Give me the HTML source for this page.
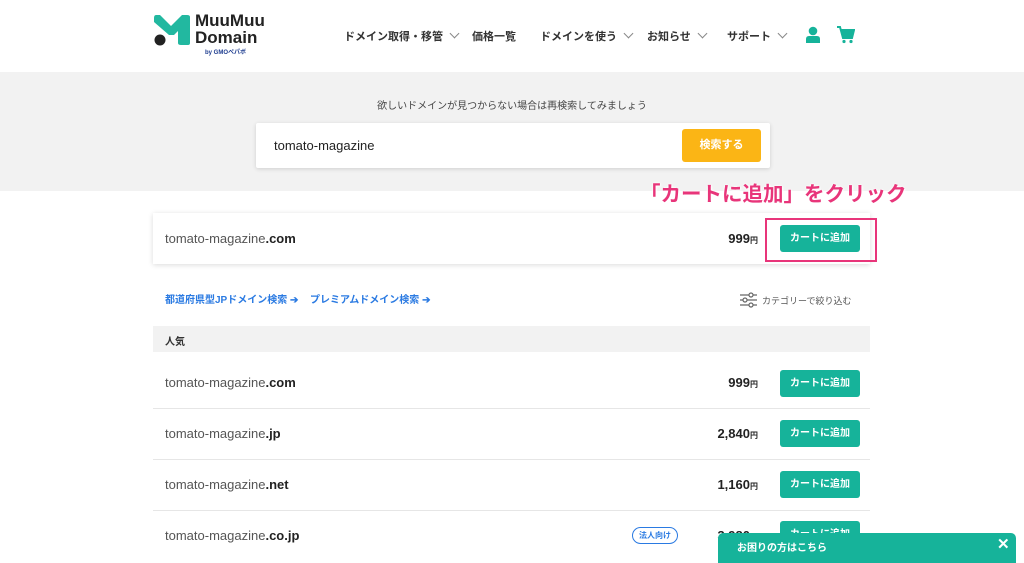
<!DOCTYPE html>
<html><head><meta charset="utf-8"><style>
*{margin:0;padding:0;box-sizing:border-box}
body{width:1024px;height:555px;overflow:hidden;background:#fff;font-family:"Liberation Sans","Noto Sans CJK JP",sans-serif;color:#333;position:relative}
.a{position:absolute}
.nav{font-size:11px;font-weight:bold;color:#333;top:28px}
.chev{display:inline-block;width:7px;height:7px;border-right:1px solid #888;border-bottom:1px solid #888;transform:rotate(45deg);margin-left:8px;position:relative;top:-3px}
.btn{background:#16b39a;color:#fff;font-size:10px;font-weight:bold;border-radius:3px;width:80px;height:27px;line-height:28px;text-align:center}
.dom{font-size:13px;color:#555}
.dom b{color:#222}
.price{font-size:13px;font-weight:bold;color:#222;text-align:right;width:100px}
.price small{font-size:8px}
.line{height:1px;background:#e6e6e6;left:153px;width:717px}
</style></head><body>
<svg class="a" style="left:152px;top:13px" width="40" height="33" viewBox="0 0 40 33">
<path d="M4 2 Q2 2 2 5 L2 9 L17 22 L22 22 L26 18 L26 30 Q26 32 29 32 L36 32 Q38 32 38 30 L38 4 Q38 2 35 2 L30 2 L19 13 L8 2 Z" fill="#22b8a0"/>
<circle cx="8" cy="27" r="5.5" fill="#222"/>
</svg>
<div class="a" style="left:195px;top:12px;font-size:17px;font-weight:bold;line-height:17px;color:#222">MuuMuu<br>Domain</div>
<div class="a" style="left:205px;top:47px;font-size:6px;color:#1d3c8f;font-weight:bold">by GMOペパボ</div>
<div class="a nav" style="left:344px">ドメイン取得・移管<span class="chev"></span></div>
<div class="a nav" style="left:472px">価格一覧</div>
<div class="a nav" style="left:540px">ドメインを使う<span class="chev"></span></div>
<div class="a nav" style="left:647px">お知らせ<span class="chev"></span></div>
<div class="a nav" style="left:727px">サポート<span class="chev"></span></div>
<svg class="a" style="left:805px;top:26px" width="16" height="17" viewBox="0 0 16 17"><circle cx="8" cy="5" r="4.3" fill="#16b39a"/><path d="M1 17 L1 13 Q1 10 4 10 L12 10 Q15 10 15 13 L15 17Z" fill="#16b39a"/></svg>
<svg class="a" style="left:837px;top:26px" width="18" height="18" viewBox="0 0 18 18"><path d="M0 1 L3 1 L6 12 L15 12 L17 4 L4 4" fill="none" stroke="#16b39a" stroke-width="2"/><path d="M4.5 4 L16.5 4 L14.5 11 L6 11Z" fill="#16b39a"/><circle cx="7" cy="15.5" r="1.6" fill="#16b39a"/><circle cx="14" cy="15.5" r="1.6" fill="#16b39a"/></svg>
<div class="a" style="left:0;top:72px;width:1024px;height:119px;background:#f2f2f2"></div>
<div class="a" style="left:0;top:97px;width:1024px;text-align:center;font-size:10px;color:#444">欲しいドメインが見つからない場合は再検索してみましょう</div>
<div class="a" style="left:256px;top:123px;width:514px;height:45px;background:#fff;box-shadow:0 1px 4px rgba(0,0,0,.15);border-radius:2px"></div>
<div class="a" style="left:274px;top:138px;font-size:13px;color:#222">tomato-magazine</div>
<div class="a" style="left:682px;top:129px;width:79px;height:33px;background:#fbb515;border-radius:3px;color:#fff;font-size:11px;font-weight:bold;text-align:center;line-height:33px">検索する</div>
<div class="a" style="left:640px;top:177px;font-size:20.5px;font-weight:bold;color:#e8357a;text-shadow:0 0 2px #fff,0 0 2px #fff,1px 1px 2px #fff">「カートに追加」をクリック</div>
<div class="a" style="left:153px;top:213px;width:717px;height:51px;background:#fff;box-shadow:0 1px 5px rgba(0,0,0,.15)"></div>
<div class="a dom" style="left:165px;top:231px">tomato-magazine<b>.com</b></div>
<div class="a price" style="left:658px;top:231px">999<small>円</small></div>
<div class="a btn" style="left:780px;top:225px">カートに追加</div>
<div class="a" style="left:765px;top:218px;width:112px;height:44px;border:2px solid #e8357a"></div>
<div class="a" style="left:165px;top:291px;font-size:10px;color:#2a7ae2;font-weight:bold">都道府県型JPドメイン検索 ➔</div>
<div class="a" style="left:310px;top:291px;font-size:10px;color:#2a7ae2;font-weight:bold">プレミアムドメイン検索 ➔</div>
<svg class="a" style="left:740px;top:292px" width="17" height="16" viewBox="0 0 17 16" stroke="#666" stroke-width="1.2" fill="#fff"><path d="M0 3H17M0 8H17M0 13H17"/><circle cx="11" cy="3" r="2"/><circle cx="5" cy="8" r="2"/><circle cx="11" cy="13" r="2"/></svg>
<div class="a" style="left:762px;top:294px;font-size:9px;color:#555">カテゴリーで絞り込む</div>
<div class="a" style="left:153px;top:326px;width:717px;height:26px;background:#f2f2f2"></div>
<div class="a" style="left:165px;top:333px;font-size:10px;font-weight:bold;color:#333">人気</div>
<div class="a dom" style="left:165px;top:375px">tomato-magazine<b>.com</b></div>
<div class="a price" style="left:658px;top:375px">999<small>円</small></div>
<div class="a btn" style="left:780px;top:370px">カートに追加</div>
<div class="a line" style="top:408px"></div>
<div class="a dom" style="left:165px;top:426px">tomato-magazine<b>.jp</b></div>
<div class="a price" style="left:658px;top:426px">2,840<small>円</small></div>
<div class="a btn" style="left:780px;top:420px">カートに追加</div>
<div class="a line" style="top:459px"></div>
<div class="a dom" style="left:165px;top:477px">tomato-magazine<b>.net</b></div>
<div class="a price" style="left:658px;top:477px">1,160<small>円</small></div>
<div class="a btn" style="left:780px;top:471px">カートに追加</div>
<div class="a line" style="top:510px"></div>
<div class="a dom" style="left:165px;top:528px">tomato-magazine<b>.co.jp</b></div>
<div class="a" style="left:632px;top:527px;width:46px;height:17px;border:1px solid #2a7ae2;border-radius:9px;font-size:8px;color:#2a7ae2;text-align:center;line-height:15px;font-weight:bold">法人向け</div>
<div class="a price" style="left:658px;top:528px">3,980<small>円</small></div>
<div class="a btn" style="left:780px;top:521px">カートに追加</div>
<div class="a" style="left:718px;top:533px;width:298px;height:30px;background:#16b39a;border-radius:5px 5px 0 0"></div>
<div class="a" style="left:737px;top:539px;font-size:10px;font-weight:bold;color:#fff">お困りの方はこちら</div>
<div class="a" style="left:997px;top:535px;font-size:15px;font-weight:bold;color:#fff">✕</div>
</body></html>
